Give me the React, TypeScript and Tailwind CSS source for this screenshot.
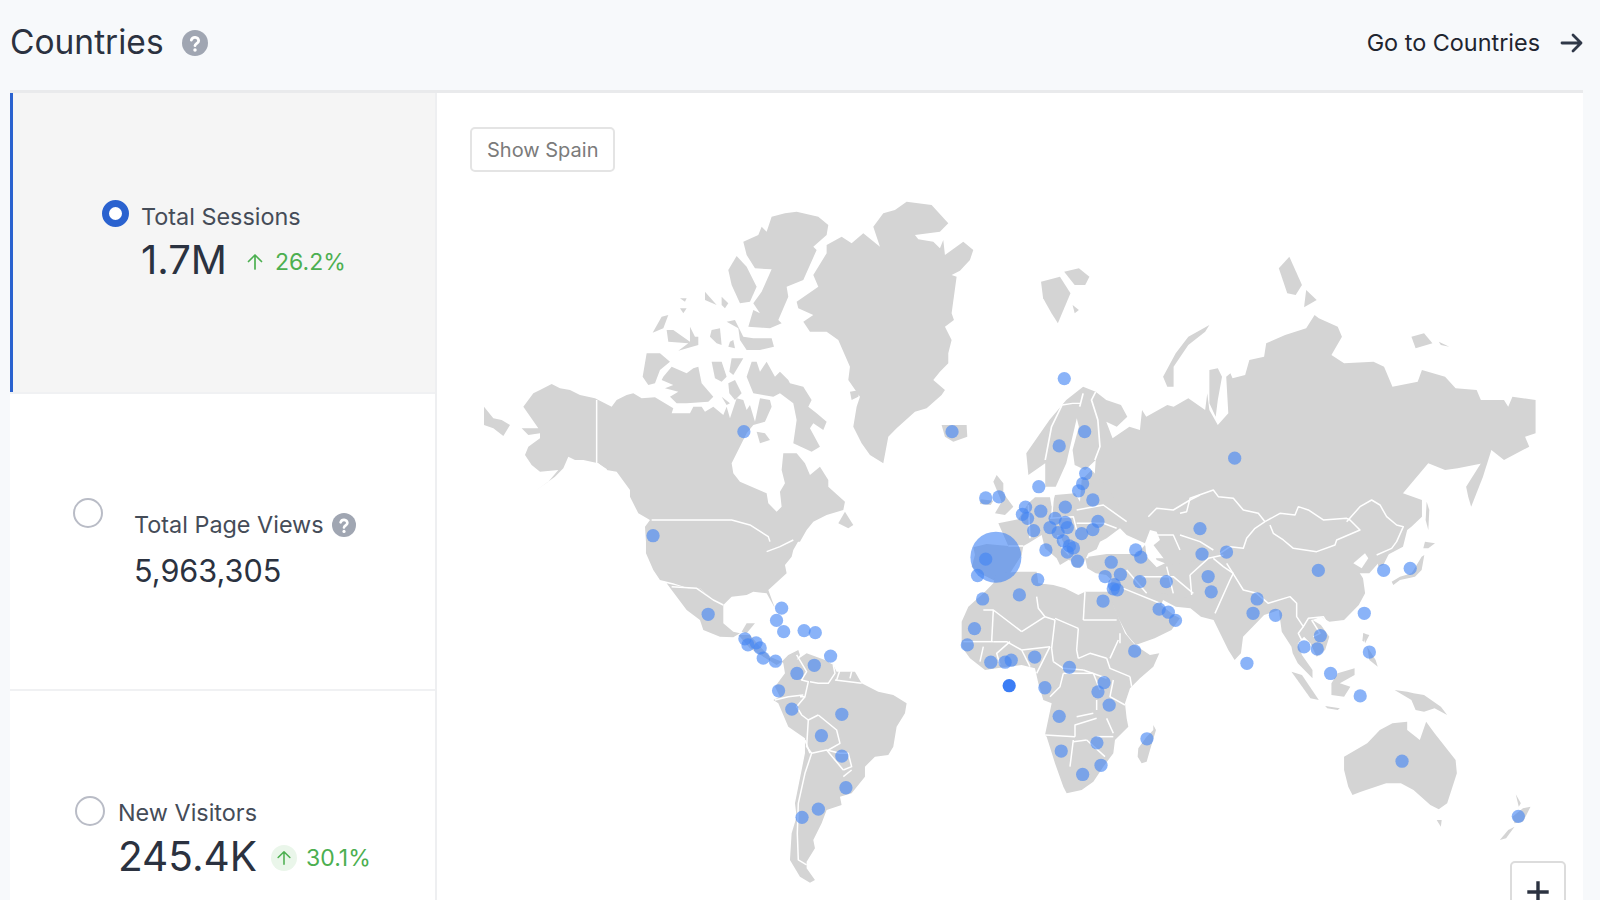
import React from "react";

const Z3 = "translate(460 180) scale(0.3333)";
const Z4 = "translate(460 540) scale(0.3333)";
const Z5 = "translate(940 230) scale(0.4209 0.3333)";
const Z6 = "translate(940 560) scale(0.4209 0.3333)";
const Z8 = "translate(960 460) scale(0.3333)";
const Z9 = "translate(1180 470) scale(0.3333)";
const Z10 = "translate(950 590) scale(0.3333)";

const z3Land = [
  "850,185 895,165 905,140 920,155 935,110 975,100 1010,95 1075,110 1105,135 1100,165 1060,200 1070,210 1030,300 980,320 985,350 955,420 965,430 930,445 865,440 880,390 900,400 880,370 905,335 935,268 885,265 860,225",
  "805,270 830,228 860,260 890,320 870,365 840,370 815,315",
  "1240,140 1270,100 1305,90 1340,65 1415,75 1465,130 1440,155 1365,165 1375,178 1420,185 1440,205 1450,180 1455,225 1510,185 1540,210 1530,240 1500,272 1475,285 1490,290 1475,400 1482,420 1455,440 1475,480 1465,520 1465,550 1440,575 1420,600 1455,630 1445,645 1400,685 1365,695 1310,745 1285,770 1270,850 1230,825 1205,790 1180,740 1190,680 1200,650 1165,600 1170,560 1135,480 1100,455 1050,455 1030,425 1060,405 1015,385 1010,365 1075,320 1060,285 1100,220 1100,195 1145,170 1175,190 1210,160 1260,200",
  "660,355 680,355 675,365",
  "660,385 680,385 670,400",
  "735,335 770,375 735,360",
  "785,350 805,370 795,385 785,375",
  "578,458 605,410 625,405 610,445",
  "620,450 640,450 690,485 690,440 705,470 715,470 715,495 655,512 685,490 625,485",
  "755,450 780,445 785,495 770,490 750,470",
  "800,425 825,420 850,470 880,475 935,475 942,500 900,510 860,510 840,480 835,445",
  "810,485 820,480 825,505 805,500",
  "560,520 600,520 630,545 600,570 585,610 565,615 548,590",
  "610,590 635,560 680,580 700,565 715,560 725,610 760,650 745,665 680,670 650,670 630,650 655,635 615,625 640,615 605,600",
  "755,545 785,545 800,590 785,605 765,595",
  "815,535 850,535 820,585 808,575",
  "805,610 825,600 845,640 825,660 808,640",
  "785,650 810,670 800,675",
  "860,590 875,545 890,545 900,575 920,545 945,590 960,575 985,600 990,610 1030,620 1055,660 1045,680 1070,700 1100,725 1090,750 1060,730 1050,745 1080,800 1055,815 1000,790 1010,720 1000,670 960,640 940,650 880,640",
  "890,755 915,760 930,780 900,790",
  "1170,635 1200,630 1195,650 1175,660",
  "1445,735 1520,735 1522,770 1480,785 1455,770",
  "72,680 100,715 125,720 150,735 130,768 100,745 72,735",
  "190,680 220,640 240,630 275,612 300,625 330,630 360,645 405,655 455,680 470,660 500,645 520,640 545,655 585,652 640,685 635,700 690,700 700,680 725,680 735,695 760,680 790,705 800,680 810,715 830,655 850,660 860,690 870,675 885,725 900,655 930,660 935,680 915,725 880,735 860,760 815,850 820,880 840,905 920,940 925,970 950,995 965,980 960,935 975,910 965,870 970,820 1010,820 1035,850 1050,885 1080,860 1105,900 1105,920 1155,965 1150,990 1100,1005 1060,1025 1040,1050 1020,1085 558,1085 555,1040 570,1020 535,1000 510,950 510,930 470,875 440,870 415,850 370,840 345,840 325,830 310,865 285,890 230,930 265,905 295,870 240,875 215,855 195,825 205,800 240,775 240,760 205,765 185,745 235,745",
  "1135,1030 1155,995 1180,1035 1165,1045",
];
const z3Borders = [
  "410,660 410,850 440,870",
  "575,1020 815,1020 870,1035 925,1070 930,1085",
];

const z4Land = [
  "558,-5 558,40 580,90 600,120 640,130 685,145 720,145 760,180 790,195 815,170 860,165 880,155 920,160 945,205 925,150 980,100 975,75 995,50 1000,30 1020,-5",
  "620,130 685,145 720,145 760,180 790,195 790,250 820,275 840,280 820,292 780,290 730,270 720,240 680,210 635,150",
  "845,275 860,250 885,250 860,280",
  "835,285 870,285 900,320 930,350 965,365 950,375 910,350 870,325",
  "965,365 985,345 1015,330 1020,345 1010,360 1040,340 1095,360 1120,375 1130,395 1155,395 1185,395 1205,430 1255,455 1300,465 1340,490 1335,520 1310,560 1300,620 1285,645 1245,650 1215,680 1215,710 1175,760 1140,770 1145,795 1100,810 1085,850 1060,900 1065,925 1040,965 1040,985 1065,1020 1050,1028 1020,1010 990,960 995,880 1010,830 1005,790 1035,640 1035,595 985,560 955,490 940,480 960,470 945,440 975,400 970,370",
];
const z4Borders = [
  "635,140 710,145 760,180 790,195",
  "920,35 960,20 1000,0",
  "1010,345 1040,395 1025,420 1045,425 1035,470 1020,470",
  "1120,375 1125,400 1105,430 1075,430 1050,425",
  "1140,390 1130,420",
  "1175,395 1170,415",
  "1125,420 1205,430",
  "945,480 985,470 1030,465",
  "1035,470 1010,500 1025,525 1045,540 1075,525",
  "1045,540 1040,620 1055,640 1100,630 1150,690",
  "1075,525 1130,570 1140,610 1105,630",
  "1100,630 1140,640 1165,640 1175,680 1150,690",
  "1150,710 1175,690",
  "1055,640 1035,700 1015,790 1012,880 1015,960 1040,975",
  "1035,600 1050,640",
];

const z5Land = [
  "240,155 285,140 310,190 280,280 265,250 245,205",
  "295,125 330,115 355,140 345,165 320,165",
  "315,225 330,240 320,250",
  "805,115 830,80 860,165 845,195 825,190",
  "870,180 895,210 865,232",
  "530,440 560,370 590,320 640,285 630,305 590,345 555,410 555,470 540,470",
  "640,420 660,415 670,440 660,510 655,560 640,520",
  "1120,320 1150,310 1170,340 1130,355",
  "1185,335 1210,350 1190,345",
  "205,670 260,570 300,510 340,470 370,485 395,510 430,525 445,560 420,590 395,575 410,625 450,590 475,600 480,540 490,560 540,525 555,530 590,505 630,540 635,490 640,540 660,585 685,550 680,440 690,430 695,445 725,435 735,390 770,380 775,340 820,315 870,295 890,255 900,265 945,290 955,320 930,375 960,400 1030,395 1055,410 1075,470 1135,455 1145,420 1200,440 1225,475 1275,480 1285,510 1340,510 1350,530 1360,500 1415,510 1415,610 1390,620 1400,650 1340,690 1310,660 1290,700 1230,715 1200,720 1160,700 1100,790 1145,810 1145,860 1120,890 1110,900 1100,950 1055,980 1020,1030 600,1030 540,1000 480,900 440,860 390,820 365,780 370,690 345,720 320,705 315,660 330,590 325,565 300,700 275,770 250,770 250,700 210,735",
  "1255,800 1250,770 1295,680 1310,660 1290,740 1262,830",
];
const z5Borders = [
  "250,690 265,590 290,525 315,520 335,520",
  "370,485 360,510 375,570 380,650 368,690",
  "340,490 332,530",
];

const z6Land = [
  "345,-5 1020,-5 985,15 1005,55 1010,100 995,135 960,180 925,185 905,170 885,180 905,195 925,230 915,270 895,290 880,250 865,230 850,250 860,285 885,330 885,355 850,310 838,280 835,260 812,215 805,150 770,165 720,230 715,280 700,300 685,270 650,180 620,170 595,145 560,140 530,120 525,135 555,165 570,175 550,210 510,235 465,255 445,225 420,165 400,100 408,60 395,45 370,40 350,25",
  "1005,220 1020,225 1010,250",
  "1015,260 1035,300 1040,320 1020,300",
  "930,370 945,340 985,325 985,345 950,370 975,380 960,410 930,405",
  "835,335 860,345 900,420 880,415",
  "915,438 950,445 945,450 920,445",
  "1080,390 1110,395 1125,400 1150,405 1190,440 1205,465 1175,445 1150,455 1130,450 1120,420",
  "960,590 1015,550 1045,510 1075,490 1110,485 1110,510 1140,540 1155,485 1175,520 1225,600 1228,640 1205,730 1185,748 1165,735 1125,690 1095,670 1060,670 1000,695 980,705 970,680 960,630",
  "1180,780 1192,780 1190,800",
  "1360,770 1385,745 1403,740 1385,785 1365,790",
  "1350,810 1365,800 1345,835 1330,840",
  "1368,703 1380,730 1375,740",
];

const z8Land = [
  "100,65 110,45 130,70 130,100 160,140 135,165 105,160 125,125",
  "62,118 100,122 92,135 60,132",
  "40,262 80,252 145,258 115,190 175,178 205,130 225,112 270,112 275,140 285,105 345,100 360,125 365,60 395,30 440,80 500,170 560,170 585,215 555,250 500,225 480,205 440,235 420,245 410,268 385,280 375,300 360,325 340,320 325,280 300,225 290,225 305,265 345,305 325,300 300,315 290,295 255,265 245,225 205,250 190,258 185,285 150,340 110,365 60,340 35,320 45,285",
  "385,290 440,282 530,282 555,255 580,290 600,320 720,300 720,420 500,380 470,335 385,325",
];
const z8Borders = [
  "565,170 590,145 640,150 690,120 720,105",
  "570,225 640,225 660,270",
  "350,150 430,135 500,185",
  "350,190 430,190 470,205",
  "205,135 210,235",
  "145,258 190,258",
  "280,105 275,175",
  "270,175 340,170 350,210",
  "500,330 560,400",
  "545,350 640,350 700,400",
  "490,385 600,430",
  "620,320 640,400",
];
const z8Seas = [
  "570,210 590,215 600,240 575,260 590,300 615,310 590,322 560,290 555,250",
];
const z9Land = [
  "635,335 660,320 695,310 725,260 733,255 725,300 705,320 660,330 640,345",
  "735,215 765,220 745,235 730,235",
  "740,95 748,120 745,180 737,150",
  "590,255 635,235 610,285 595,290",
  "550,490 558,492 552,515 547,512",
];
const z9Borders = [
  "0,130 20,125 30,85 100,60 115,80 160,85 190,120 235,130 255,155",
  "255,155 225,175 200,205 190,235 150,230 120,250",
  "0,195 60,215 100,240",
  "255,155 300,130 345,135 355,110 385,120 430,150 500,145 510,150 540,180 470,210 465,225 410,245 340,235 310,210 280,190 270,165",
  "500,155 540,110 575,90 600,105 620,140 650,165 670,170 650,215 635,235 590,255",
  "140,280 165,320 190,360 230,370 265,400 330,380 350,400 350,440 370,470 385,445 430,440 445,465",
  "100,265 130,290 160,310 150,330 105,430",
  "30,315 35,375",
  "30,315 85,265 130,255",
  "370,470 355,490 375,530",
  "395,450 420,490 400,500",
];
const z9Seas = ["520,280 555,250 565,265 545,295"];

const z10Land = [
  "35,95 55,50 105,5 130,-20 140,-50 210,-55 260,-55 265,-20 310,-15 345,-5 385,15 405,5 480,5 490,45 525,130 555,165 600,195 628,190 610,230 570,265 540,295 525,340 530,385 535,410 495,450 490,490 460,530 430,575 395,600 350,610 340,590 315,520 290,440 285,435 305,340 280,330 265,280 255,235 215,225 140,235 105,240 60,205 35,170 35,130",
  "565,475 590,440 610,420 610,405 618,420 600,480 590,515 575,520 563,500",
];
const z10Borders = [
  "100,60 130,60 215,125",
  "130,60 125,155",
  "40,155 130,155",
  "215,125 285,80 315,90",
  "260,20 265,55 285,80",
  "315,90 305,175 310,215",
  "315,85 385,115",
  "405,5 400,90",
  "400,90 500,90",
  "385,115 380,180 385,205",
  "310,215 340,235 400,240",
  "385,205 420,190 470,205",
  "470,205 480,235 540,260",
  "510,160 510,130",
  "480,205 505,150",
  "400,240 470,265",
  "340,250 330,290 300,320",
  "340,250 430,250",
  "430,250 450,300",
  "540,260 545,290",
  "490,270 480,320 525,345",
  "440,330 440,360",
  "380,380 430,370",
  "285,435 375,440",
  "375,440 375,405 440,385",
  "370,450 360,530",
  "370,455 410,450",
  "410,450 465,500",
  "470,385 490,430",
  "440,440 490,440",
  "130,155 170,155 215,180",
  "215,180 300,170",
  "215,180 240,230",
  "300,170 260,250",
  "180,155 140,190 150,225",
  "100,170 90,215",
];

const dots: [number, number][] = [
  [1043,371],[729,423],[933,423],[1063,423],[1038,437],[1210,449],[1064,464],[1061,474],[1018,477],[1057,481],[1071,490],[966,488],[979,487],[1005,497],[1002,504],[1007,508],[1020,501],[1044,497],[1034,508],[1029,517],[1044,512],[1046,517],[1013,520],[1076,511],[1071,519],[1060,523],[1037,522],[1042,530],[1048,535],[1052,537],[1046,541],[1025,539],[1056,550],[1113,539],[1118,546],[1089,551],[1176,518],[1178,543],[1202,541],[966,548],[958,564],[1017,568],[1083,565],[1092,573],[1098,563],[1091,577],[1095,578],[1117,570],[1143,570],[1184,565],[1187,580],[1292,559],[1356,559],[1382,557],[963,587],[999,583],[1081,589],[1136,597],[1145,600],[1152,608],[1228,601],[1232,587],[1250,603],[1337,601],[1112,638],[955,616],[948,632],[971,649],[985,649],[991,647],[1014,644],[1048,654],[1294,623],[1278,634],[1291,636],[1342,639],[1222,650],[1304,660],[1333,682],[1082,669],[1076,678],[1087,691],[1024,674],[1038,702],[1075,728],[1124,724],[1040,736],[1079,750],[1061,759],[1374,746],[1488,800],
  [640,525],[694,602],[766,596],[761,608],[768,619],[788,618],[799,620],[730,626],[733,632],[741,630],[745,635],[748,645],[760,648],[814,643],[798,652],[781,660],[763,677],[776,695],[825,700],[805,721],[825,741],[829,772],[802,793],[786,801],
];

function Land({ t, pts }: { t: string; pts: string[] }) {
  return (
    <g transform={t} fill="#d4d4d4">
      {pts.map((p, i) => (
        <polygon key={i} points={p} />
      ))}
    </g>
  );
}
function Lines({ t, pts, w = 4.5 }: { t: string; pts: string[]; w?: number }) {
  return (
    <g transform={t} fill="none" stroke="#ffffff" strokeWidth={w} strokeLinejoin="round">
      {pts.map((p, i) => (
        <polyline key={i} points={p} />
      ))}
    </g>
  );
}
function Seas({ t, pts }: { t: string; pts: string[] }) {
  return (
    <g transform={t} fill="#ffffff">
      {pts.map((p, i) => (
        <polygon key={i} points={p} />
      ))}
    </g>
  );
}

function WorldMap() {
  return (
    <svg viewBox="437 93 1146 807" width="1146" height="807" className="block blur-[0.5px]">
      <Land t={Z3} pts={z3Land} />
      <Land t={Z4} pts={z4Land} />
      <Land t={Z5} pts={z5Land} />
      <Land t={Z6} pts={z6Land} />
      <Land t={Z8} pts={z8Land} />
      <Land t={Z9} pts={z9Land} />
      <Land t={Z10} pts={z10Land} />
      <Seas t={Z8} pts={z8Seas} />
      <Seas t={Z9} pts={z9Seas} />
      <Lines t={Z3} pts={z3Borders} />
      <Lines t={Z4} pts={z4Borders} />
      <Lines t={Z5} pts={z5Borders} w={4} />
      <Lines t={Z8} pts={z8Borders} />
      <Lines t={Z9} pts={z9Borders} />
      <Lines t={Z10} pts={z10Borders} />
      <g transform="scale(1.0204)">
        <circle cx={976} cy={546} r={25} fill="#4285f4" fillOpacity={0.62} />
        {dots.map(([x, y], i) => (
          <circle key={i} cx={x} cy={y} r={6.5} fill="#4285f4" fillOpacity={0.62} />
        ))}
        <circle cx={989} cy={672} r={6.5} fill="#3b7df5" />
      </g>
    </svg>
  );
}

function Help({ size, cls }: { size: number; cls?: string }) {
  return (
    <svg width={size} height={size} viewBox="0 0 24 24" className={cls}>
      <circle cx="12" cy="12" r="12" fill="#a0a6b2" />
      <path d="M8.6 9.3a3.5 3.5 0 0 1 6.8 .6c0 2.3-3.2 2.5-3.4 4.6" fill="none" stroke="#ffffff" strokeWidth="2.6" strokeLinecap="round" />
      <circle cx="12" cy="18.4" r="1.6" fill="#ffffff" />
    </svg>
  );
}

function UpArrow({ size }: { size: number }) {
  return (
    <svg width={size} height={size} viewBox="0 0 20 20" fill="none" stroke="#4caf50" strokeWidth="1.7" strokeLinecap="round" strokeLinejoin="round">
      <path d="M10 17V3M3.5 9.5 10 3l6.5 6.5" />
    </svg>
  );
}

export default function App() {
  return (
    <div className="w-[1600px] h-[900px] overflow-hidden bg-[#f7f9fb] font-['Inter',sans-serif] text-[#2b3240]">
      <header className="h-[90px] flex items-center justify-between pb-[4px] pl-[10px] pr-[16px]">
        <div className="flex items-center gap-[18px]">
          <h1 className="text-[33.5px] leading-none font-normal">Countries</h1>
          <Help size={26} />
        </div>
        <div className="flex items-center gap-[20px] text-[23.4px] text-[#1f2530]">
          <span>Go to Countries</span>
          <svg width="24" height="24" viewBox="0 0 24 24" fill="none" stroke="#2f3848" strokeWidth="2.8" strokeLinecap="round" strokeLinejoin="round">
            <path d="M2 12h19M13 4l8 8-8 8" />
          </svg>
        </div>
      </header>
      <div className="ml-[10px] mr-[17px] h-[810px] border-t-[3px] border-[#e9eaec] bg-white flex">
        <div className="w-[427px] shrink-0 border-r-2 border-[#eeeff1] flex flex-col">
          <div className="h-[299px] shrink-0 bg-[#f5f5f5] border-l-[3px] border-[#2a62cf] pl-[89px] pt-[106px] flex items-start gap-[12px]">
            <div className="w-[27px] h-[27px] mt-[1px] rounded-full border-[7px] border-[#2a62cf] bg-white shrink-0"></div>
            <div className="flex flex-col">
              <span className="text-[23.4px] leading-[28px] mt-[4px] text-[#454c58]">Total Sessions</span>
              <div className="flex items-center mt-[5px]">
                <span className="text-[40px] leading-[48px] text-[#2b3240]">1.7M</span>
                <span className="ml-[18px] mt-[4px]"><UpArrow size={20} /></span>
                <span className="ml-[10px] mt-[4px] text-[23px] text-[#4caf50]">26.2%</span>
              </div>
            </div>
          </div>
          <div className="h-[299px] shrink-0 border-t-2 border-b-2 border-[#f0f1f3] pl-[63px] pt-[104px] flex items-start gap-[31px]">
            <div className="w-[30px] h-[30px] rounded-full border-2 border-[#b9bcc6] bg-white shrink-0"></div>
            <div className="flex flex-col mt-[13px]">
              <div className="flex items-center gap-[8px]">
                <span className="text-[23.4px] leading-[28px] text-[#454c58]">Total Page Views</span>
                <Help size={24} />
              </div>
              <span className="text-[30.6px] leading-[38px] mt-[13px] text-[#2b3240]">5,963,305</span>
            </div>
          </div>
          <div className="flex-1 pl-[65px] pt-[105px] flex items-start gap-[13px]">
            <div className="w-[30px] h-[30px] rounded-full border-2 border-[#b9bcc6] bg-white shrink-0"></div>
            <div className="flex flex-col">
              <span className="text-[23.4px] leading-[28px] mt-[3px] text-[#454c58]">New Visitors</span>
              <div className="flex items-center mt-[6px]">
                <span className="text-[40.6px] leading-[48px] text-[#2b3240]">245.4K</span>
                <span className="ml-[14px] mt-[1px] w-[26px] h-[26px] rounded-full bg-[#eaf6ea] flex items-center justify-center"><UpArrow size={18} /></span>
                <span className="ml-[9px] mt-[3px] text-[23px] text-[#4caf50]">30.1%</span>
              </div>
            </div>
          </div>
        </div>
        <div className="relative flex-1 overflow-hidden bg-white">
          <WorldMap />
          <button className="absolute left-[33px] top-[34px] h-[45px] px-[15px] rounded-[5px] border-2 border-[#e4e4e4] bg-white text-[20px] text-[#7b7b7b]">
            Show Spain
          </button>
          <div className="absolute left-[1073px] top-[768px] w-[56px] h-[80px] rounded-[5px] border-2 border-[#dcdcdc] bg-white flex justify-center pt-[17px]">
            <svg width="24" height="24" viewBox="0 0 24 24" stroke="#2b3240" strokeWidth="3.4" strokeLinecap="square">
              <path d="M12 3v20M3 12h18" />
            </svg>
          </div>
        </div>
      </div>
    </div>
  );
}
